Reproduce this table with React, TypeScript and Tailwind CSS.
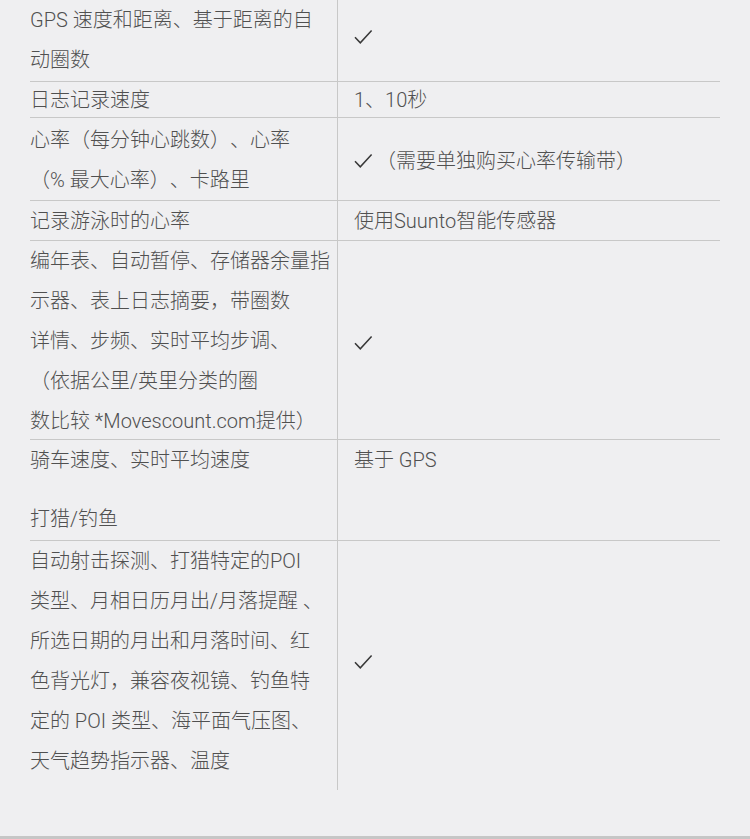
import React from 'react';

// Spec comparison table (feature / support)

const FONT = 'Roboto, "Noto Sans CJK SC", sans-serif';

function Check() {
  return (
    <svg width="19" height="16" viewBox="0 0 19 16" className="flex-shrink-0">
      <path d="M1 8.2 L6.3 13.8 L17.6 1.6" fill="none" stroke="#383838" strokeWidth="1.5" strokeLinejoin="miter" />
    </svg>
  );
}

function Lines({ lines }: { lines: string[] }) {
  return (
    <>
      {lines.map((l, i) => (
        <div key={i} className="h-[40px] leading-[40px] whitespace-nowrap">
          {l}
        </div>
      ))}
    </>
  );
}

const App: React.FC = () => {
  return (
    <div
      className="w-[750px] h-[839px] bg-[#efeff1] text-[20px] text-[#505050] font-light flex flex-col [text-spacing-trim:space-all]"
      style={{ fontFamily: FONT }}
    >
      <div className="ml-[30px] w-[690px] flex flex-col">
        {/* Row 1 */}
        <div className="flex h-[82px] border-b border-[#c8c8c8]">
          <div className="w-[308px] border-r border-[#c8c8c8]">
            <Lines lines={['GPS 速度和距离、基于距离的自', '动圈数']} />
          </div>
          <div className="flex-1 pl-[16px] flex items-center pb-[7px]">
            <Check />
          </div>
        </div>

        {/* Row 2 */}
        <div className="flex h-[36px] border-b border-[#c8c8c8]">
          <div className="w-[308px] border-r border-[#c8c8c8] flex items-center">
            <span className="leading-[36px] whitespace-nowrap">日志记录速度</span>
          </div>
          <div className="flex-1 pl-[16px] flex items-center">
            <span className="leading-[36px]">1、10秒</span>
          </div>
        </div>

        {/* Row 3 */}
        <div className="flex h-[83px] border-b border-[#c8c8c8]">
          <div className="w-[308px] border-r border-[#c8c8c8] pt-[2px]">
            <Lines lines={['心率（每分钟心跳数）、心率', '（% 最大心率）、卡路里']} />
          </div>
          <div className="flex-1 pl-[16px] flex items-center pt-[3px]">
            <Check />
            <span className="ml-[3px] whitespace-nowrap">（需要单独购买心率传输带）</span>
          </div>
        </div>

        {/* Row 4 */}
        <div className="flex h-[40px] border-b border-[#c8c8c8]">
          <div className="w-[308px] border-r border-[#c8c8c8] flex items-center">
            <span className="whitespace-nowrap">记录游泳时的心率</span>
          </div>
          <div className="flex-1 pl-[16px] flex items-center">
            <span className="whitespace-nowrap">使用Suunto智能传感器</span>
          </div>
        </div>

        {/* Row 5 */}
        <div className="flex h-[199px] border-b border-[#c8c8c8]">
          <div className="w-[308px] border-r border-[#c8c8c8]">
            <Lines
              lines={[
                '编年表、自动暂停、存储器余量指',
                '示器、表上日志摘要，带圈数',
                '详情、步频、实时平均步调、',
                '（依据公里/英里分类的圈',
                '数比较 *Movescount.com提供）',
              ]}
            />
          </div>
          <div className="flex-1 pl-[16px] flex items-center pt-[5px]">
            <Check />
          </div>
        </div>

        {/* Row 6 */}
        <div className="flex h-[101px] border-b border-[#c8c8c8]">
          <div className="w-[308px] border-r border-[#c8c8c8]">
            <Lines lines={['骑车速度、实时平均速度']} />
            <div className="mt-[19px]">
              <Lines lines={['打猎/钓鱼']} />
            </div>
          </div>
          <div className="flex-1 pl-[16px]">
            <div className="h-[40px] leading-[40px] whitespace-nowrap">基于 GPS</div>
          </div>
        </div>

        {/* Row 7 */}
        <div className="flex h-[249px]">
          <div className="w-[308px] border-r border-[#c8c8c8] pb-[8px]">
            <Lines
              lines={[
                '自动射击探测、打猎特定的POI',
                '类型、月相日历月出/月落提醒 、',
                '所选日期的月出和月落时间、红',
                '色背光灯，兼容夜视镜、钓鱼特',
                '定的 POI 类型、海平面气压图、',
                '天气趋势指示器、温度',
              ]}
            />
          </div>
          <div className="flex-1 pl-[16px] flex items-center pb-[8px]">
            <Check />
          </div>
        </div>
      </div>

      <div className="flex-1" />
      <div className="h-[3px] bg-[#c6c6c6]" />
    </div>
  );
};

export default App;
